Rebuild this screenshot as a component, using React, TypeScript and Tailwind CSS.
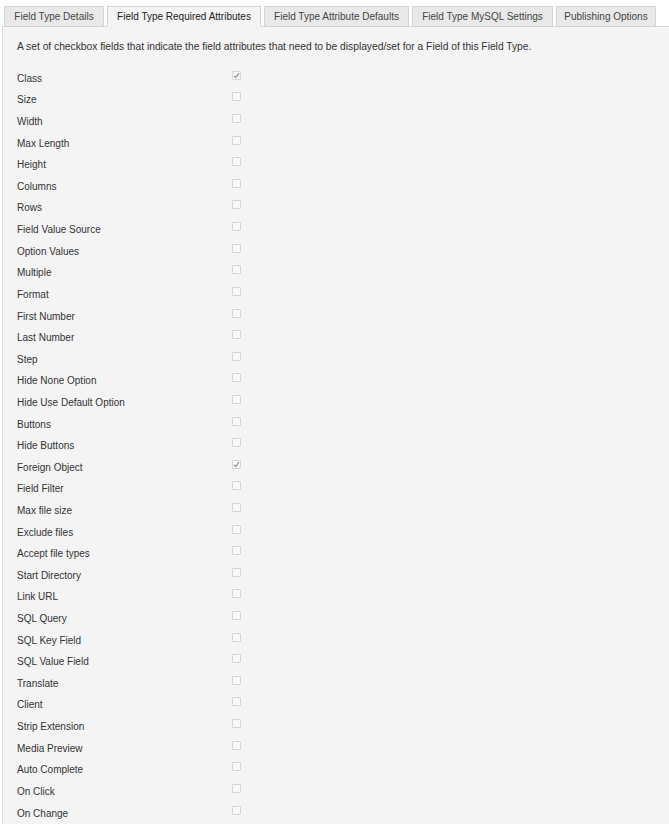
import React from 'react'

const tabs = [
  { label: 'Field Type Details', w: 'w-[100px]' },
  { label: 'Field Type Required Attributes', w: 'w-[154px]', active: true },
  { label: 'Field Type Attribute Defaults', w: 'w-[145px]' },
  { label: 'Field Type MySQL Settings', w: 'w-[141px]' },
  { label: 'Publishing Options', w: 'w-[100px]' },
]

const fields: [string, boolean][] = [
  ['Class', true],
  ['Size', false],
  ['Width', false],
  ['Max Length', false],
  ['Height', false],
  ['Columns', false],
  ['Rows', false],
  ['Field Value Source', false],
  ['Option Values', false],
  ['Multiple', false],
  ['Format', false],
  ['First Number', false],
  ['Last Number', false],
  ['Step', false],
  ['Hide None Option', false],
  ['Hide Use Default Option', false],
  ['Buttons', false],
  ['Hide Buttons', false],
  ['Foreign Object', true],
  ['Field Filter', false],
  ['Max file size', false],
  ['Exclude files', false],
  ['Accept file types', false],
  ['Start Directory', false],
  ['Link URL', false],
  ['SQL Query', false],
  ['SQL Key Field', false],
  ['SQL Value Field', false],
  ['Translate', false],
  ['Client', false],
  ['Strip Extension', false],
  ['Media Preview', false],
  ['Auto Complete', false],
  ['On Click', false],
  ['On Change', false],
]

function Check({ checked }: { checked: boolean }) {
  return (
    <span className="flex h-[9px] w-[9px] items-center justify-center rounded-[1px] border border-[#d6d6d6] bg-[#f9f9f9]">
      {checked && (
        <svg width="7" height="7" viewBox="0 0 7 7">
          <path d="M1 3.8 L2.8 5.5 L6 1.2" stroke="#9a9a9a" strokeWidth="1.4" fill="none" />
        </svg>
      )}
    </span>
  )
}

export default function App() {
  return (
    <div className="min-h-[825px] w-[669px] overflow-hidden bg-white font-['Liberation_Sans',Arial,sans-serif] text-[#333]">
      {/* tabs */}
      <div className="flex gap-[3px] pl-[4px] pt-[6px]">
        {tabs.map((t) => (
          <div
            key={t.label}
            className={`${t.w} relative flex h-[21px] items-center justify-center border border-[#d3d3d3] text-[10px] ${
              t.active ? 'z-10 border-b-[#f4f4f4] bg-[#f4f4f4] text-[#222]' : 'bg-[#e9e9e9] text-[#444]'
            }`}
          >
            {t.label}
          </div>
        ))}
      </div>

      {/* panel */}
      <div className="-mt-px ml-[2px] min-h-[797px] border-l border-t border-[#d9d9d9] bg-[#f4f4f4] pl-[14px] pt-[11px]">
        <p className="h-[18px] text-[10.25px] leading-[18px]">
          A set of checkbox fields that indicate the field attributes that need to be displayed/set for a Field of this Field Type.
        </p>
        <div className="pt-[11.5px]">
          {fields.map(([name, checked]) => (
            <div key={name} className="flex h-[21.62px] items-center text-[10px]">
              <span className="w-[215px]">{name}</span>
              <span className="-mt-[6px]">
                <Check checked={checked} />
              </span>
            </div>
          ))}
        </div>
      </div>
    </div>
  )
}
